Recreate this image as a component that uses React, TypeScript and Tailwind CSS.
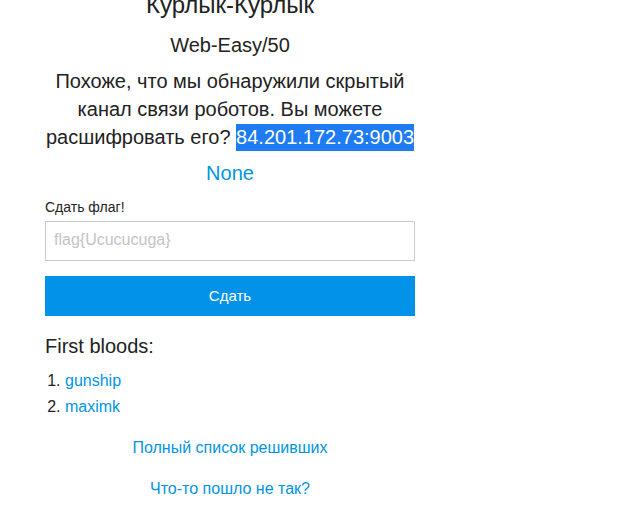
import React from 'react';

const FONT = { fontFamily: '"Liberation Sans", Arial, sans-serif' };

const App: React.FC = () => {
  const bloods = ['gunship', 'maximk'];

  return (
    <div className="min-h-[514px] bg-white text-[#222]" style={FONT}>
      <div className="w-[370px] ml-[45px] -mt-[9px] flex flex-col">
        <h1 className="text-[24px] leading-[28px] text-center">Курлык-Курлык</h1>
        <h2 className="mt-[12px] text-[20px] leading-[28px] text-center">Web-Easy/50</h2>
        <p className="mt-[8px] text-[20px] leading-[28px] text-center">
          Похоже, что мы обнаружили скрытый канал связи роботов. Вы можете расшифровать его?{' '}
          <span className="inline-block bg-[#1e7bf2] text-white leading-[27px]">84.201.172.73:9003</span>
        </p>
        <a href="#" className="mt-[8px] text-[20px] leading-[28px] text-center text-[#0095e3]">
          None
        </a>

        <form className="mt-[10px] flex flex-col" onSubmit={(e) => e.preventDefault()}>
          <label htmlFor="flag" className="text-[14px] leading-[20px]">
            Сдать флаг!
          </label>
          <input
            id="flag"
            name="flag"
            placeholder="flag{Ucucucuga}"
            className="mt-[4px] h-[40px] w-full border border-[#ccc] px-[8px] pb-[2px] text-[16px] placeholder:text-[#c4c4c4] focus:outline-none"
          />
          <button
            type="submit"
            className="mt-[15px] h-[40px] w-full bg-[#0293e8] text-white text-[15px]"
          >
            Сдать
          </button>
        </form>

        <h3 className="mt-[16px] text-[20px] leading-[28px]">First bloods:</h3>
        <ol className="mt-[8px] list-decimal pl-[20px] text-[16px] leading-[26px]">
          {bloods.map((name) => (
            <li key={name}>
              <a href="#" className="text-[#0095e3]">
                {name}
              </a>
            </li>
          ))}
        </ol>

        <a href="#" className="mt-[16px] text-[16px] leading-[24px] text-center text-[#0095e3]">
          Полный список решивших
        </a>
        <a href="#" className="mt-[17px] text-[16px] leading-[24px] text-center text-[#0095e3]">
          Что-то пошло не так?
        </a>
      </div>
    </div>
  );
};

export default App;
